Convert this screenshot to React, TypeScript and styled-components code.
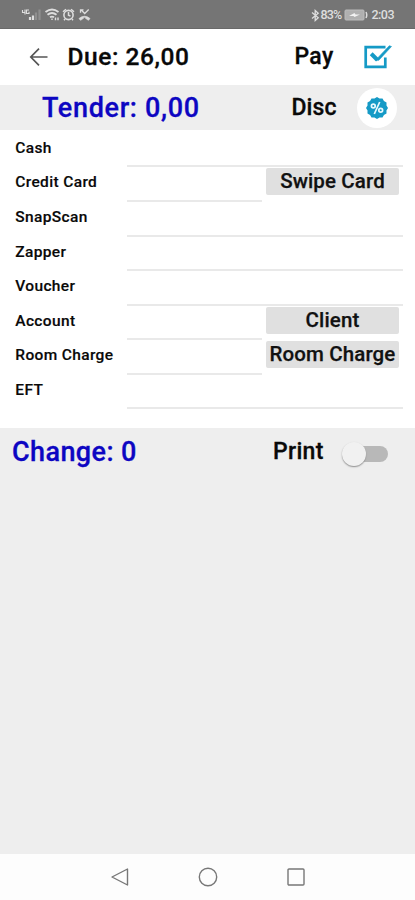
import React from 'react';
import styled, { createGlobalStyle } from 'styled-components';

const GlobalStyle = createGlobalStyle`
  * { box-sizing: border-box; }
  body { margin: 0; background: #eeeeee; font-family: Roboto, sans-serif; }
`;

const Screen = styled.main`
  width: 415px;
  height: 900px;
  display: flex;
  flex-direction: column;
  overflow: hidden;
  background: #eeeeee;
  color: #090909;
`;

const StatusBar = styled.header`
  height: 29px;
  flex: none;
  display: flex;
  align-items: center;
  justify-content: space-between;
  padding: 2px 21px 0 21px;
  background: #757575;
  border-bottom: 1px solid #696969;
  color: #dedede;
`;

const StatusText = styled.span<{ $spacing: number }>`
  font-size: 12.5px;
  line-height: 14px;
  font-weight: 500;
  letter-spacing: ${(p) => p.$spacing}px;
`;

const StatusGroup = styled.div<{ $gap: number }>`
  display: flex;
  align-items: center;
  gap: ${(p) => p.$gap}px;
`;

const Bar = styled.section<{ $height: number; $tinted?: boolean; $left: number }>`
  height: ${(p) => p.$height}px;
  flex: none;
  display: flex;
  align-items: center;
  padding-left: ${(p) => p.$left}px;
  background: ${(p) => (p.$tinted ? '#eeeeee' : '#ffffff')};
`;

const Heading = styled.span<{ $size: number; $width: number; $blue?: boolean; $spacing?: number }>`
  width: ${(p) => p.$width}px;
  flex: none;
  white-space: nowrap;
  font-weight: 500;
  font-size: ${(p) => p.$size}px;
  line-height: 30px;
  letter-spacing: ${(p) => p.$spacing ?? 0}px;
  -webkit-text-stroke: 0.3px currentColor;
  color: ${(p) => (p.$blue ? '#0d06c2' : '#090909')};
`;

const IconButton = styled.button<{ $width: number }>`
  width: ${(p) => p.$width}px;
  padding: 0;
  border: 0;
  background: none;
  display: flex;
  flex: none;
`;

const RoundButton = styled.button`
  width: 40px;
  height: 40px;
  padding: 0;
  border: 0;
  border-radius: 50%;
  background: #ffffff;
  display: grid;
  place-items: center;
`;

const TenderForm = styled.section`
  height: 298px;
  flex: none;
  padding: 2.9px 12px 0 15px;
  background: #ffffff;
`;

const TenderRow = styled.div`
  height: 34.55px;
  display: grid;
  grid-template-columns: 112px 135px 1fr;
`;

const Label = styled.label`
  padding-left: 0.3px;
  font-size: 15.5px;
  line-height: 30px;
  font-weight: 500;
  letter-spacing: 0.35px;
  -webkit-text-stroke: 0.15px currentColor;
  white-space: nowrap;
`;

const Field = styled.div<{ $wide: boolean }>`
  grid-column: ${(p) => (p.$wide ? '2 / 4' : '2')};
  border-bottom: 2px solid #e9e9e9;
`;

const ActionButton = styled.button`
  width: 133px;
  height: 27px;
  margin: 1px 0 0 4px;
  padding: 0;
  border: 0;
  border-radius: 2px;
  background: #e0e0e0;
  color: #111111;
  font: 500 20.5px/25px Roboto, sans-serif;
  letter-spacing: 0.12px;
  -webkit-text-stroke: 0.25px currentColor;
  white-space: nowrap;
`;

const Switch = styled.button`
  width: 48px;
  height: 28px;
  margin-top: 3px;
  padding: 0 2px 0 0;
  border: 0;
  background: none;
  display: flex;
  align-items: center;
`;

const Thumb = styled.span`
  width: 24px;
  height: 24px;
  flex: none;
  border-radius: 50%;
  background: #f1f1f1;
  box-shadow: 0 1px 1.5px #8c8c8c;
  z-index: 1;
`;

const Track = styled.span`
  width: 34px;
  height: 16px;
  flex: none;
  margin-left: -12px;
  border-radius: 8px;
  background: #b8b8b8;
`;

const Body = styled.div`
  flex: 1;
`;

const NavBar = styled.nav`
  height: 46px;
  flex: none;
  display: flex;
  justify-content: center;
  align-items: center;
  gap: 68px;
  background: #fdfdfd;
`;

const tenders: { name: string; action?: string }[] = [
  { name: 'Cash' },
  { name: 'Credit Card', action: 'Swipe Card' },
  { name: 'SnapScan' },
  { name: 'Zapper' },
  { name: 'Voucher' },
  { name: 'Account', action: 'Client' },
  { name: 'Room Charge', action: 'Room Charge' },
  { name: 'EFT' },
];

const StatusIcons = () => (
  <svg width="72" height="18" viewBox="21 6 72 18" fill="none" stroke="#dedede">
    <path d="M22.5 10v2.5h2.5M25 9.5v5M29 10h-2.5v3.5H29v-1.7" strokeWidth="1.1" />
    <path d="M30 17v3M33 15.5V20" strokeWidth="2.2" />
    <path d="M36 12.5v7.5M39.5 9.5V20" stroke="#8f8f8f" strokeWidth="2.2" />
    <path d="M45.5 12q6.5-5 13 0M47.5 14.8q4.5-3.5 9 0M50 17.3q2-1.5 4 0" strokeWidth="1.8" />
    <path d="M52 18.6v1.5M55.5 17.5v2.8M58 17.5v2.8" strokeWidth="1.4" />
    <circle cx="68.5" cy="15" r="4.6" strokeWidth="1.6" />
    <path d="M63 11.8l3-2.6M74 11.8l-3-2.6M68.5 12v3.2l2 1M65 19l-1 1.2M72 19l1 1.2" strokeWidth="1.5" />
    <path d="M81 9.8l3.7 3.7 4-4M80.5 12.8V9.9h3" strokeWidth="1.3" />
    <path d="M79 18.5q5.5-4.5 11 0l-1.5 1.8-3-2v-1h-2v1l-3 2Z" fill="#dedede" strokeWidth=".7" />
  </svg>
);

const BluetoothIcon = () => (
  <svg width="9" height="13" viewBox="0 0 9 13" fill="none" stroke="#dedede" strokeWidth="1.3">
    <path d="M1 3.5l6.2 5.2-3 2.8v-10l3 2.8L1 9.5" />
  </svg>
);

const BatteryIcon = () => (
  <svg width="24" height="12" viewBox="0 0 24 12" fill="none">
    <rect x="1" y="1" width="19" height="10" rx="1" fill="#b0b0b0" stroke="#bcbcbc" />
    <path d="M5 7l5.5-3 1 1.5H16L10.5 8 9.5 7Z" fill="#f2f2f2" />
    <path d="M22 3q1.5 3 0 6" stroke="#dedede" strokeWidth="1.5" />
  </svg>
);

const BackIcon = () => (
  <svg width="20" height="20" viewBox="0 0 20 20" fill="none" stroke="#555555" strokeWidth="1.7">
    <path d="M18.5 10H2M10 1.7L1.8 10l8.2 8.3" />
  </svg>
);

const PayIcon = () => (
  <svg width="28" height="24" viewBox="0 0 28 24" fill="none" stroke="#159ac6">
    <path d="M21.5 2.2H1.7v19.6h19.6V12.5" strokeWidth="2.7" />
    <path d="M7.2 8.8l6.3 6.2" strokeWidth="4" />
    <path d="M11.5 15.2l3.3.1L27.5 1.5l-2.2-.8Z" fill="#159ac6" strokeWidth=".6" />
  </svg>
);

const badgePoints = Array.from({ length: 24 }, (_, i) => {
  const radius = i % 2 ? 9.8 : 11;
  const angle = (i * Math.PI) / 12;
  return `${11 + radius * Math.cos(angle)},${11 + radius * Math.sin(angle)}`;
}).join(' ');

const DiscountIcon = () => (
  <svg width="22" height="22" viewBox="0 0 22 22" fill="none">
    <polygon points={badgePoints} fill="#159ac6" />
    <g stroke="#e8f8fd" strokeWidth="1.7">
      <path d="M13.7 5l-5.4 12" />
      <circle cx="7.3" cy="9" r="1.9" />
      <circle cx="14.7" cy="13.2" r="1.9" />
    </g>
  </svg>
);

export default function App() {
  return (
    <>
      <GlobalStyle />
      <Screen>
        <StatusBar>
          <StatusIcons />
          <StatusGroup $gap={3}>
            <StatusGroup $gap={0}>
              <BluetoothIcon />
              <StatusText $spacing={-0.8}>83%</StatusText>
            </StatusGroup>
            <BatteryIcon />
            <StatusText $spacing={-0.5}>2:03</StatusText>
          </StatusGroup>
        </StatusBar>
        <Bar $height={56} $left={29}>
          <IconButton $width={38.5} aria-label="Back"><BackIcon /></IconButton>
          <Heading $size={24.5} $width={227} $spacing={0.55}>Due: 26,00</Heading>
          <Heading $size={23} $width={69} $spacing={0.3}>Pay</Heading>
          <IconButton $width={28} aria-label="Confirm payment"><PayIcon /></IconButton>
        </Bar>
        <Bar $height={45} $left={42} $tinted>
          <Heading $size={27} $width={249.5} $spacing={0.66} $blue>Tender: 0,00</Heading>
          <Heading $size={23} $width={65.5} $spacing={0.1}>Disc</Heading>
          <RoundButton aria-label="Discount"><DiscountIcon /></RoundButton>
        </Bar>
        <TenderForm>
          {tenders.map(({ name, action }) => (
            <TenderRow key={name}>
              <Label>{name}</Label>
              <Field $wide={!action} />
              {action && <ActionButton>{action}</ActionButton>}
            </TenderRow>
          ))}
        </TenderForm>
        <Bar $height={48.5} $left={12} $tinted>
          <Heading $size={27} $width={261} $spacing={0.4} $blue>Change: 0</Heading>
          <Heading $size={23} $width={69} $spacing={0.3}>Print</Heading>
          <Switch role="switch" aria-checked="false" aria-label="Print">
            <Thumb />
            <Track />
          </Switch>
        </Bar>
        <Body />
        <NavBar>
          <svg width="20" height="20" viewBox="0 0 20 20" fill="none" stroke="#777777" strokeWidth="1.4">
            <path d="M17.5 2v16L2 10Z" strokeLinejoin="round" />
          </svg>
          <svg width="20" height="20" viewBox="0 0 20 20" fill="none" stroke="#777777" strokeWidth="1.4">
            <circle cx="10" cy="10" r="8.7" />
          </svg>
          <svg width="20" height="20" viewBox="0 0 20 20" fill="none" stroke="#777777" strokeWidth="1.4">
            <rect x="2" y="2" width="16" height="16" rx="1" />
          </svg>
        </NavBar>
      </Screen>
    </>
  );
}
